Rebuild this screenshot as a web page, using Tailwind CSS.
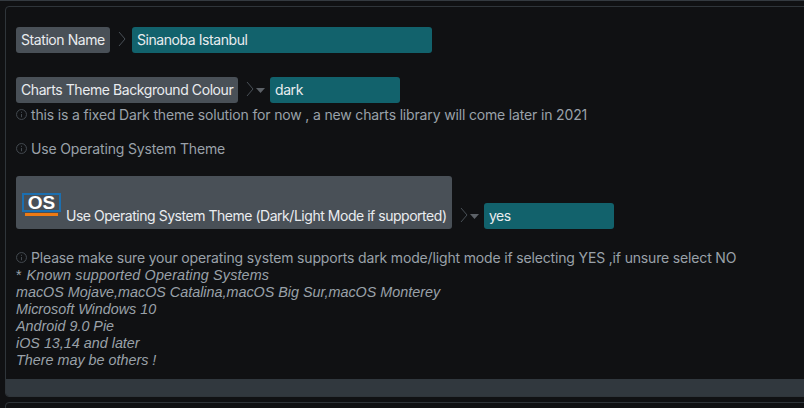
<!DOCTYPE html>
<html lang="en">
<head>
  <meta charset="UTF-8">
  <title>Station settings</title>
  <script src="https://cdn.jsdelivr.net/npm/@tailwindcss/browser@4"></script>
</head>
<body class="w-[804px] h-[408px] overflow-hidden bg-[#101113] font-['Inter',sans-serif] text-[14px] tracking-[-0.16px] leading-[17px] text-[#9aa1a9]">

  <div class="h-px bg-[#343a40]"></div>

  <div class="ml-[5px] mt-[5px] w-[820px] h-[391px] flex flex-col border border-[#2f353a] rounded-[4px] overflow-hidden">
    <div class="flex-1 pl-[10px] pt-[20px]">

      <div class="flex items-center h-[26px] tracking-[-0.42px]">
        <span class="h-[26px] px-[5px] pb-px flex items-center rounded-[3px] bg-[#495057] text-[#e9ecef]">Station Name</span>
        <svg class="ml-[8px] w-[8px] h-[16px] mb-[3px]" viewBox="0 0 8 16" fill="none" stroke="#495057"><path d="M1 1l6 7-6 7"/></svg>
        <span class="ml-[6px] w-[300px] h-[26px] px-[5px] pb-px flex items-center rounded-[3px] bg-[#12626c] text-[#e9ecef]">Sinanoba Istanbul</span>
      </div>

      <div class="flex items-center h-[26px] mt-[24px] tracking-[-0.42px]">
        <span class="w-[222px] h-[26px] px-[5px] pb-px flex items-center whitespace-nowrap rounded-[3px] bg-[#495057] text-[#e9ecef]">Charts Theme Background Colour</span>
        <svg class="ml-[8px] w-[8px] h-[16px] mb-[3px]" viewBox="0 0 8 16" fill="none" stroke="#495057"><path d="M1 1l6 7-6 7"/></svg>
        <svg class="ml-[2px] w-[9px] h-[5px]" viewBox="0 0 9 5" fill="#5c6167"><path d="M0 0h9L4.500 5z"/></svg>
        <span class="ml-[5px] w-[130px] h-[26px] px-[5px] pb-px flex items-center rounded-[3px] bg-[#12626c] text-[#e9ecef]">dark</span>
      </div>

      <p class="flex items-center h-[17px] mt-[3px]">
        <svg class="w-[11px] h-[11px] mr-[4px]" viewBox="0 0 12 12" fill="none" stroke="#495057"><circle cx="6" cy="6" r="5.400"/><path d="M6 5.500v3.500M6 3v1.200"/></svg>
        this is a fixed Dark theme solution for now , a new charts library will come later in 2021
      </p>

      <p class="flex items-center h-[17px] mt-[17px]">
        <svg class="w-[11px] h-[11px] mr-[4px]" viewBox="0 0 12 12" fill="none" stroke="#495057"><circle cx="6" cy="6" r="5.400"/><path d="M6 5.500v3.500M6 3v1.200"/></svg>
        Use Operating System Theme
      </p>

      <div class="flex items-end mt-[19px] tracking-[-0.47px]">
        <div class="w-[436px] h-[53px] pl-[6px] pb-[5px] flex items-end rounded-[3px] bg-[#495057] text-[#e9ecef]">
          <div class="w-[39px] shrink-0 mb-[8px]">
            <div class="h-[19px] border-2 border-[#1c6fb0] flex items-center justify-center text-white font-bold text-[19px] tracking-normal leading-none font-['Liberation_Sans',sans-serif]">OS</div>
            <div class="ml-[3px] mt-[1px] w-[33px] h-[3px] bg-[#ee7a14]"></div>
          </div>
          <span class="ml-[5px] whitespace-nowrap">Use Operating System Theme (Dark/Light Mode if supported)</span>
        </div>
        <div class="flex items-center h-[26px]">
          <svg class="ml-[8px] w-[8px] h-[16px] mb-[3px]" viewBox="0 0 8 16" fill="none" stroke="#495057"><path d="M1 1l6 7-6 7"/></svg>
          <svg class="ml-[2px] w-[9px] h-[5px]" viewBox="0 0 9 5" fill="#5c6167"><path d="M0 0h9L4.500 5z"/></svg>
          <span class="ml-[5px] w-[130px] h-[26px] px-[5px] pb-px flex items-center rounded-[3px] bg-[#12626c] text-[#e9ecef]">yes</span>
        </div>
      </div>

      <p class="flex items-center h-[17px] mt-[20px]">
        <svg class="w-[11px] h-[11px] mr-[4px]" viewBox="0 0 12 12" fill="none" stroke="#495057"><circle cx="6" cy="6" r="5.400"/><path d="M6 5.500v3.500M6 3v1.200"/></svg>
        Please make sure your operating system supports dark mode/light mode if selecting YES ,if unsure select NO
      </p>
      <div class="mt-px font-['Liberation_Sans',sans-serif] text-[14.35px] tracking-normal italic">
        <p><span class="not-italic mr-[1px]">*</span> <span class="tracking-[0.15px]">Known supported Operating Systems</span></p>
        <p>macOS Mojave,macOS Catalina,macOS Big Sur,macOS Monterey</p>
        <p>Microsoft Windows 10</p>
        <p>Android 9.0 Pie</p>
        <p>iOS 13,14 and later</p>
        <p>There may be others !</p>
      </div>
    </div>
    <div class="h-[17px] bg-[#31383e]"></div>
  </div>

  <div class="ml-[5px] mt-[5px] w-[820px] h-[20px] border border-[#2f353a] rounded-[4px]"></div>

</body>
</html>
